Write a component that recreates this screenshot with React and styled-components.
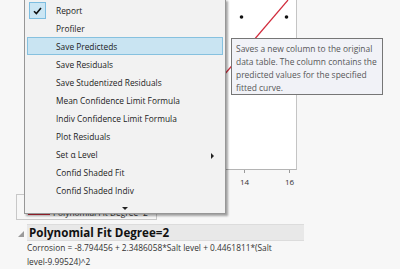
import styled, { createGlobalStyle } from "styled-components"

const GlobalStyle = createGlobalStyle`
    html, body {
        margin: 0;
        padding: 0;
        background: #f7f7f7;
    }
    body {
        width: 400px;
        height: 269px;
        overflow: hidden;
        font-family: "Open Sans", "Noto Sans", sans-serif;
    }
`

const Page = styled.div`
    position: relative;
    width: 400px;
    height: 269px;
    overflow: hidden;
    background: #f7f7f7;
`

const Report = styled.div`
    display: flex;
    flex-direction: column;
`

const PlotFrame = styled.div`
    margin-left: 120px;
    width: 176px;
    height: 169px;
    background: #fff;
    border-right: 1px solid #c4c4c4;
    border-bottom: 1px solid #b4b4b4;
`

const AxisRow = styled.div`
    position: relative;
    margin-left: 120px;
    width: 177px;
    height: 22px;
    font-size: 8px;
    color: #333;
`

const Tick = styled.div`
    position: absolute;
    top: 0;
    left: ${p => p.x}px;
    width: 1px;
    height: 3px;
    background: #9a9a9a;
`

const TickLabel = styled.span`
    position: absolute;
    top: 6px;
    left: ${p => p.x}px;
    transform: translateX(-50%);
`

const LegendBox = styled.div`
    margin-left: 16px;
    margin-top: 2px;
    width: 141px;
    height: 26px;
    border: 1px solid #c8c8c8;
    display: flex;
    align-items: flex-end;
    gap: 3px;
    padding: 0 0 1px 11px;
    box-sizing: border-box;
    font-size: 8.4px;
    white-space: nowrap;
    color: #333;
`

const Swatch = styled.span`
    flex: none;
    width: 22px;
    height: 2px;
    background: #d12b3c;
    margin-bottom: 3px;
`

const OutlineRow = styled.div`
    display: flex;
    align-items: center;
    margin-top: 4px;
    padding-left: 18px;
`

const Disclosure = styled.span`
    width: 0;
    height: 0;
    border-left: 6px solid transparent;
    border-bottom: 6px solid #9a9a9a;
    margin-right: 3px;
    margin-top: 3px;
`

const OutlineBar = styled.div`
    width: 277px;
    height: 17px;
    background: #e8e8e8;
    border-top: 1px solid #dcdcdc;
    border-bottom: 1px solid #dcdcdc;
    display: flex;
    align-items: center;
    padding-left: 2px;
    box-sizing: border-box;
    font-weight: 700;
    font-size: 11.6px;
    white-space: nowrap;
    color: #111;
`

const Formula = styled.div`
    margin: 0 0 0 27px;
    font-size: 8.35px;
    line-height: 14px;
    white-space: nowrap;
    color: #333;
`

const Menu = styled.div`
    position: absolute;
    left: 24px;
    top: -1px;
    width: 202px;
    height: 215px;
    background: #f2f2f2;
    border: 1px solid #979797;
    border-top: none;
    box-shadow: 2px 2px 2px rgba(0, 0, 0, 0.35);
    display: flex;
    flex-direction: column;
    padding-top: 2px;
    box-sizing: border-box;
    font-size: 8.35px;
    color: #1b1b1b;
`

const Item = styled.div`
    position: relative;
    display: flex;
    align-items: center;
    height: 18.1px;
    margin: 0 2px;
    padding-left: 28px;
    box-sizing: border-box;
    white-space: nowrap;
    border: 1px solid ${p => p.$active ? "#86c1df" : "transparent"};
    background: ${p => p.$active ? "#c9e4f2" : "transparent"};
`

const Check = styled.span`
    position: absolute;
    left: 1px;
    top: 0px;
    width: 15px;
    height: 15px;
    background: #cbe6f4;
    border: 1px solid #7dbde0;
    display: flex;
    align-items: center;
    justify-content: center;
`

const SubArrow = styled.span`
    position: absolute;
    right: 8px;
    top: 6px;
    width: 0;
    height: 0;
    border-top: 3px solid transparent;
    border-bottom: 3px solid transparent;
    border-left: 3px solid #222;
`

const MoreRow = styled.div`
    display: flex;
    justify-content: center;
    padding-top: 7px;
`

const DownArrow = styled.span`
    width: 0;
    height: 0;
    border-left: 3px solid transparent;
    border-right: 3px solid transparent;
    border-top: 3px solid #222;
`

const Tooltip = styled.div`
    position: absolute;
    left: 231px;
    top: 38px;
    width: 152px;
    height: 57px;
    box-sizing: border-box;
    padding: 3px 4px;
    background: #f1f2f7;
    border: 1px solid #767676;
    font-size: 8.45px;
    line-height: 13px;
    white-space: nowrap;
    color: #575757;
`

const items = [
    { label: "Report", checked: true },
    { label: "Profiler" },
    { label: "Save Predicteds", active: true },
    { label: "Save Residuals" },
    { label: "Save Studentized Residuals" },
    { label: "Mean Confidence Limit Formula" },
    { label: "Indiv Confidence Limit Formula" },
    { label: "Plot Residuals" },
    { label: "Set α Level", sub: true },
    { label: "Confid Shaded Fit" },
    { label: "Confid Shaded Indiv" },
]

const App = () => {
    return <Page>
        <GlobalStyle />
        <Report>
            <PlotFrame>
                <svg width="176" height="169">
                    <line x1="168" y1="0" x2="104" y2="75" stroke="#d12b3c" strokeWidth="1.2" />
                    <circle cx="121.5" cy="17" r="1.8" fill="#111" />
                    <circle cx="166.5" cy="17" r="1.8" fill="#111" />
                </svg>
            </PlotFrame>
            <AxisRow>
                <Tick x={124} />
                <Tick x={169} />
                <TickLabel x={124.5}>14</TickLabel>
                <TickLabel x={169.5}>16</TickLabel>
            </AxisRow>
            <LegendBox>
                <Swatch />
                <span>Polynomial Fit Degree=2</span>
            </LegendBox>
            <OutlineRow>
                <Disclosure />
                <OutlineBar>Polynomial Fit Degree=2</OutlineBar>
            </OutlineRow>
            <Formula>
                Corrosion = -8.794456 + 2.3486058*Salt level + 0.4461811*(Salt<br />
                level-9.99524)^2
            </Formula>
        </Report>

        <Menu>
            {items.map(it => <Item key={it.label} $active={it.active}>
                {it.checked && <Check>
                    <svg width="9" height="8" viewBox="0 0 9 8">
                        <path d="M1 4.2 L3.4 6.6 L8 1" fill="none" stroke="#111" strokeWidth="1.6" />
                    </svg>
                </Check>}
                {it.label}
                {it.sub && <SubArrow />}
            </Item>)}
            <MoreRow><DownArrow /></MoreRow>
        </Menu>

        <Tooltip>
            Saves a new column to the original<br />
            data table. The column contains the<br />
            predicted values for the specified<br />
            fitted curve.
        </Tooltip>
    </Page>
}

export default App
